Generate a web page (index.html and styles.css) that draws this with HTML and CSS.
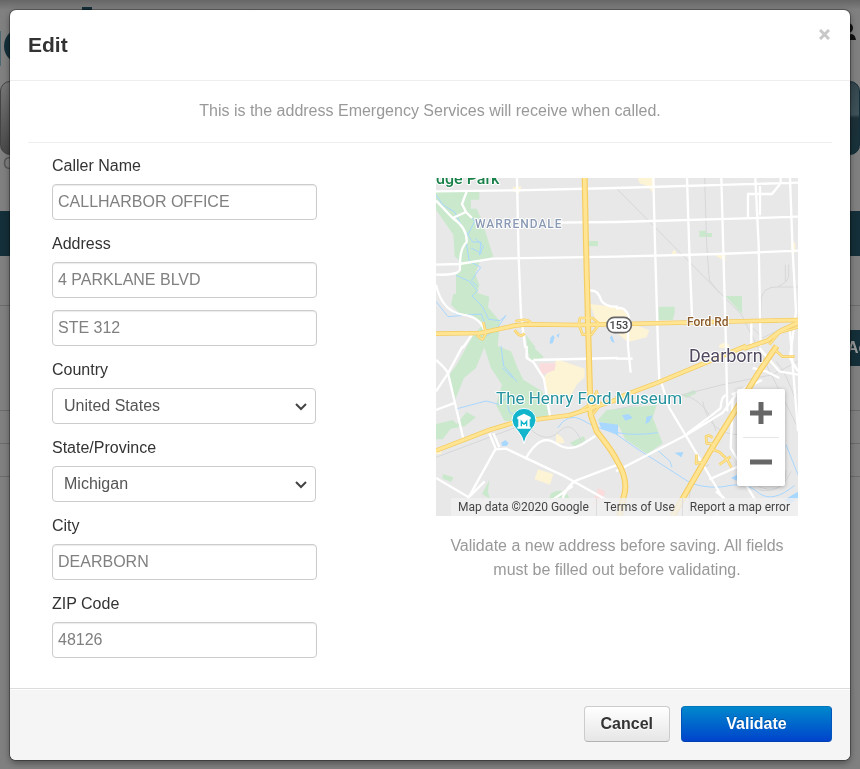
FILE: index.html
```html
<!DOCTYPE html>
<html lang="en">
<head>
<meta charset="utf-8">
<title>Edit</title>
<link rel="stylesheet" href="styles.css">
</head>
<body>
<div class="page" aria-hidden="true">
  <div class="page-top">
    <svg class="page-logo" width="100" height="81" viewBox="0 0 100 81"><path d="M0 31h1v35H0z" fill="#4d6870"/><circle cx="22" cy="46" r="18" fill="#142f39"/><path d="M82 7h10v30H82z" fill="#142f39"/></svg>
    <svg class="page-user" width="20" height="20" viewBox="0 0 20 20"><circle cx="10" cy="6" r="5"/><path d="M1 18q0-5 6-6l3 2 3-2q4 0 5 6z"/></svg>
  </div>
  <div class="page-tiles"><div class="tile tile-grey"></div><div class="tile tile-teal"></div></div>
  <div class="page-caption">C</div>
  <div class="page-band"></div>
  <div class="page-row row-tall"></div>
  <div class="page-action"><span>Ac</span></div>
  <div class="page-row row-mid"></div>
  <div class="page-row"></div>
  <div class="page-row"></div>
</div>

<div class="modal" role="dialog" aria-labelledby="dialog-title">
  <header class="modal-header">
    <h1 id="dialog-title">Edit</h1>
    <button class="close" type="button" aria-label="Close"><svg width="11" height="11" viewBox="0 0 11 11"><path d="M1 1l9 9M10 1l-9 9"/></svg></button>
  </header>
  <main class="modal-body">
    <p class="intro">This is the address Emergency Services will receive when called.</p>
    <div class="columns">
      <form class="fields" id="address-form">
        <label for="caller">Caller Name</label>
        <input id="caller" type="text" value="CALLHARBOR OFFICE">
        <label for="address">Address</label>
        <input id="address" type="text" value="4 PARKLANE BLVD">
        <input id="address2" type="text" value="STE 312" aria-label="Address line 2">
        <label for="country">Country</label>
        <div class="select"><select id="country"><option>United States</option></select><svg width="14" height="8" viewBox="0 0 14 8"><path d="M2 1l5 5 5-5"/></svg></div>
        <label for="state">State/Province</label>
        <div class="select"><select id="state"><option>Michigan</option></select><svg width="14" height="8" viewBox="0 0 14 8"><path d="M2 1l5 5 5-5"/></svg></div>
        <label for="city">City</label>
        <input id="city" type="text" value="DEARBORN">
        <label for="zip">ZIP Code</label>
        <input id="zip" type="text" value="48126">
      </form>
      <section class="location">
        <div class="map">
          <svg class="map-canvas" viewBox="0 0 362 338" role="img" aria-label="Map of Dearborn">
            <rect width="362" height="338" fill="#e8e8e8"/>
            <g transform="scale(.33333)">
              <g class="park">
                <path d="M0 38H130V65H105V92H122L135 120 172 236 132 248 118 288 130 320 124 345 160 356 156 388 192 430 188 472 185 504 225 520 245 570 262 605 318 640 340 714 270 732 205 728 180 680 198 620 165 570 145 508 120 570 84 600 58 664 40 590 62 560 110 475 145 435 70 405 45 380 52 348H60V290L78 255 56 235 52 170 0 95Z"/>
                <path d="M0 738L50 726 62 738 92 702 120 718 86 745 44 752 20 784H0Z"/>
                <path d="M458 189h28v16h-28zM790 158h20v7h18v12h-38zM868 354h50v53zM668 388l6-2h42v20l-6 20h-42z"/>
                <path d="M270 504h18l35 32-12 14h-26zM484 728l28-32 70-8 80-6-12 36 30 78-46 32-66-44-18-38-36-8zM736 652l38-16 8 10-30 14zM20 888l32 10-6 14-26-10zM138 948l22-42-4 36 6 20zM402 794l42-20 4 14-32 18zM345 946q40-20 55 14h-60z"/>
                <path d="M270 470l30 40h-26z"/>
              </g>
              <g class="commercial">
                <path d="M605 0h50v48l-22-24-22-8zM230 28l26-4-6 22-18-6zM462 378l84 10v50h-62zM540 394q40-10 42 42l58 20-8 22-56 14-36-30V430M708 226l6-12 6 10 10 10h-24zM838 226h30v24l-28-16zM1066 194h12v30h-12zM850 500l20-8 10 10v8h-30z"/>
                <path d="M320 604l44-60 82 28v26l-22 20-26 44-62-14zM306 874l46 14-10 32-46-16zM360 766l18 12 8 16-26 4zM0 820l16-8v16H0z"/>
              </g>
              <path d="M310 556h50l-4 20-44 18zM486 930l22 10-10 30-32 16z" fill="#fbdcdc"/>
              <g class="rail">
                <path d="M540 30L915 408M806 0L812 200 820 306 850 345M975 504V365q5-40 50-38h60M1025 326q30-12 33-32V260M1048 260v50M915 408L1086 750M950 450l30 30 70-36"/>
                <path d="M0 838L245 746M540 694L660 670 860 620 1010 590 1086 550M740 650q75 20 100 110M1020 550q30 30 60 120M280 750q50 50 90 10t70 40M800 670q20 100 110 100M820 860q-70 30-60 150M970 936q80 12 80-60M925 850l20 60q80 60 120-30"/>
              </g>
              <g class="water">
                <path d="M0 50l20 30 36 22 20 40 34 50 25 0-4 40M90 190l10 60 34 18-28 40 18 18M96 170l20-40-26-30M105 210l32 16M60 292l40 18 24 28-16 16 30 30 20 40 34 4 18-16-22 32-36 30M0 370l36 46 100-8 14 40M20 372l34 34 50 8M118 180l24 26-12 24"/>
                <path d="M60 693l90-24 40 10 20-20 10 44 24 12M195 504l8 60 16 18 24 30M200 570l30 30M365 750q30-46 70-26 100 60 230 40M540 768l60 42 165 106q62 20 120 6 46-10 85 24 40 30 106-24M664 816l38 34 6 18M1050 800l36 90"/>
              </g>
              <path d="M343 480l8-9 5 7-6 18-9 1zM361 472l10-6-4 14zM522 478l6-6 8 24-10-6zM488 732l58 8v32l-50-20zM558 712l20-4 12 12-22 8zM650 712l-10 20-12 6 4-22zM716 824l26-2-6 16zM196 794l12-8 10 10-6 8h-14zM885 900l22-12-6 20zM1045 965l41-24v20l-24 16z" fill="#a8d7ff"/>
              <g class="street">
                <path d="M0 40L240 37 540 30 1086 14M360 134L540 132 900 122 1086 116M0 260L70 258 170 242 540 236 850 228 1086 218M243 0L248 240 255 410 268 510M652 0L657 200 666 510 670 610M753 0L760 220 768 416M856 0L862 220 870 504 874 700M958 0L968 200 974 504M1062 0L1070 220 1080 400 1062 540 1086 580M1034 0L1034 16 1008 48H936V118M972 24V112"/>
                <path d="M93 38L78 78 90 102 50 120 0 68M50 120q44 30 42 72-22 20-20 80 0 20-72 18M90 102l18 18M0 320Q18 400 80 410q60 8 68 60M80 510l28-40M462 338q24-4 34 30 12 20 50 18M540 392q30-10 40 30"/>
                <path d="M0 546q30 26 36 40l46 196M0 640l36-54 44-82M0 696l58-22M272 504v36l20 12 32 50 18 114M292 546L546 540M160 766l20 48 30-2 170 80 168 94M172 766l18 42M0 900l98 58 48-48M98 958l80-144M268 844q44-82 92-48 40 28 86-2l32-20M380 960q18-48 55-58L546 860M280 1014l130-90"/>
                <path d="M540 880L752 770 860 704 900 650M674 608L700 690 760 790 860 960M576 430v74l8 80M540 542h50M946 434v70M1062 460L1086 760M970 510l60 70 56 10M950 570l40 10 40 20M888 650l90-44M876 650q-20 0-22 40-10 10-100 76M890 660l-6 150 44 74M820 904l90-40M840 940l24 20-24 54M930 920l30 50"/>
              </g>
              <path class="ramp-edge" d="M142 432l8 34-10 18-14-8 6-16M238 430q36-12 48 6M266 466q-14 16-30-10M432 420h38l20 18-24 32h-26l-12-32zM436 696l30-20 16-36 10 42-22 28M1000 500l30-36 56-16M1020 518l20 18 36 0M830 780q-10-12-20-4l2 20 22 2M824 812l26 10 22 20 14 26M850 860l34-24M782 830l-2 26 24-4"/>
              <path class="highway-edge thin" d="M0 467L135 465 235 443 270 439 430 441 1086 426M0 818L160 756 240 732 400 712 540 666M540 662Q605 636 665 614L930 504M924 512l70-24 40-30 52-24"/>
              <path class="highway-edge" d="M446 0L450 200 456 440 458 504 464 710 482 760Q530 820 544 850 580 910 562 960L550 1014M1022 504L970 580 900 694 822 820 710 1014"/>
              <path class="ramp" d="M142 432l8 34-10 18-14-8 6-16M238 430q36-12 48 6M266 466q-14 16-30-10M432 420h38l20 18-24 32h-26l-12-32zM436 696l30-20 16-36 10 42-22 28M1000 500l30-36 56-16M1020 518l20 18 36 0M830 780q-10-12-20-4l2 20 22 2M824 812l26 10 22 20 14 26M850 860l34-24M782 830l-2 26 24-4"/>
              <path class="highway thin" d="M0 467L135 465 235 443 270 439 430 441 1086 426M0 818L160 756 240 732 400 712 540 666M540 662Q605 636 665 614L930 504M924 512l70-24 40-30 52-24"/>
              <path class="highway" d="M446 0L450 200 456 440 458 504 464 710 482 760Q530 820 544 850 580 910 562 960L550 1014M1022 504L970 580 900 694 822 820 710 1014"/>
              <path d="M264 797q-4-22-20-40-16-16-16-30a36 36 0 1172 0q0 14-16 30-16 18-20 40z" fill="#12b5cb" stroke="#fff" stroke-width="3"/>
              <path d="M244 724v-7l20-10 20 10v7zM247 724h34v22h-34zM244 746h40v6h-40z" fill="#fff"/>
              <path d="M256 745v-15l8 9 8-9v15" fill="none" stroke="#12b5cb" stroke-width="4"/>
              <rect x="513" y="418" width="73" height="46" rx="22" fill="#fff" stroke="#666" stroke-width="5"/>
            </g>
            <text class="map-label green" x="0" y="6">dge Park</text>
            <text class="map-label district" x="39" y="50">WARRENDALE</text>
            <text class="map-label route" x="183" y="151">153</text>
            <text class="map-label road" x="251" y="148">Ford Rd</text>
            <text class="map-label city" x="253" y="184">Dearborn</text>
            <text class="map-label museum" x="60" y="226">The Henry Ford Museum</text>
          </svg>
          <div class="zoom">
            <button type="button" aria-label="Zoom in"><svg width="22" height="22" viewBox="0 0 22 22"><path d="M11 0v22M0 11h22"/></svg></button>
            <button type="button" aria-label="Zoom out"><svg width="22" height="22" viewBox="0 0 22 22"><path d="M0 11h22"/></svg></button>
          </div>
          <div class="attribution"><span>Map data ©2020 Google</span><a href="#terms">Terms of Use</a><a href="#report">Report a map error</a></div>
        </div>
        <p class="hint">Validate a new address before saving. All fields must be filled out before validating.</p>
      </section>
    </div>
  </main>
  <footer class="modal-footer">
    <button class="btn" type="button">Cancel</button>
    <button class="btn primary" type="submit" form="address-form">Validate</button>
  </footer>
</div>
</body>
</html>
```
FILE: styles.css
```css
* { box-sizing: border-box; }
html, body { height: 100%; }
body {
  margin: 0;
  padding: 10px;
  overflow: hidden;
  background: #808080;
  color: #333;
  font: 16px/24px "Liberation Sans", Arial, sans-serif;
}
button, input, select { font: inherit; }
h1, p { margin: 0; }

/* Dimmed page behind the dialog */
.page { position: fixed; inset: 0; overflow: hidden; }
.page-top {
  display: flex;
  justify-content: space-between;
  height: 81px;
  background: linear-gradient(#666, #808080 10px);
}
.page-user { margin-top: 22px; margin-right: 2px; fill: #111; }
.page-tiles { display: flex; justify-content: space-between; height: 74px; }
.tile { width: 110px; border: 1px solid #444; border-radius: 10px; }
.tile-grey { background: linear-gradient(#777, #484848); }
.tile-teal { background: linear-gradient(#34454d, #3f525a 45%, #1d3038 50%, #18323b); border-color: #142f39; }
.page-caption { height: 56px; padding-left: 3px; line-height: 18px; color: #555; }
.page-band { height: 45px; background: #142f39; }
.page-row { height: 33px; border-bottom: 1px solid #6b6b6b; }
.row-tall { height: 50px; }
.row-mid { height: 45px; }
.page-action { display: flex; justify-content: flex-end; height: 36px; margin-top: 24px; background: linear-gradient(90deg, transparent 50%, #142f39 50%); }
.page-action span { width: 13px; line-height: 36px; font-weight: bold; color: #999; }

.modal {
  position: relative;
  border-radius: 6px;
  background: #fff;
  box-shadow: 0 0 0 1px rgba(0, 0, 0, .3), 0 3px 7px rgba(0, 0, 0, .4);
}
.modal-header {
  display: flex;
  justify-content: space-between;
  align-items: flex-start;
  padding: 18px;
  border-bottom: 1px solid #eee;
}
.modal-header h1 { font-size: 21px; line-height: 34px; }
.close { display: flex; padding: 0; margin: 1px 2px; border: 0; background: none; }
.close path { stroke: #c8c8c8; stroke-width: 3; fill: none; }

.modal-body { padding: 18px 18px 30px; }
.intro { padding-bottom: 19px; border-bottom: 1px solid #eee; text-align: center; color: #999; }
.columns { display: flex; justify-content: space-between; padding: 11px 34px 0 24px; }
.fields { display: flex; flex-direction: column; width: 265px; }
.fields label { margin-bottom: 6px; }
.fields input, .select { height: 36px; margin-bottom: 12px; }
.fields input {
  padding: 4px 5px;
  border: 1px solid #ccc;
  border-radius: 4px;
  box-shadow: inset 0 1px 1px rgba(0, 0, 0, .08);
  color: #808080;
}
.fields input:last-child { margin-bottom: 0; }
.select { position: relative; width: 264px; }
.select select {
  appearance: none;
  width: 100%;
  height: 100%;
  padding: 4px 11px;
  border: 1px solid #ccc;
  border-radius: 4px;
  background: #fff;
  color: #555;
}
.select svg { position: absolute; right: 8px; top: 15px; pointer-events: none; }
.select path { fill: none; stroke: #444; stroke-width: 2; }

.location { width: 362px; padding-top: 24px; }
.map { position: relative; border-radius: 1px; }
.map-canvas { display: block; width: 100%; }
.hint { margin-top: 18px; text-align: center; color: #999; }
.park { fill: #cae8cc; }
.commercial { fill: #fdf3d5; }
.rail { fill: none; stroke: #d6d7d9; stroke-width: 3; }
.water { fill: none; stroke: #a8d7ff; stroke-width: 3; }
.street { fill: none; stroke: #fff; stroke-width: 7; stroke-linejoin: round; }
.highway-edge { fill: none; stroke: #f5cd62; stroke-width: 18; }
.highway { fill: none; stroke: #ffe593; stroke-width: 11; }
.highway-edge.thin { stroke-width: 14; }
.highway.thin { stroke-width: 9; }
.ramp-edge { fill: none; stroke: #f5cd62; stroke-width: 8; stroke-linejoin: round; }
.ramp { fill: none; stroke: #ffe593; stroke-width: 4; stroke-linejoin: round; }
.map-label {
  font-family: Roboto, sans-serif;
  font-weight: 500;
  paint-order: stroke;
  stroke: #fff;
  stroke-width: 2px;
  stroke-linejoin: round;
}
.green { font-size: 16px; fill: #188048; }
.district { font-size: 12px; letter-spacing: 1px; fill: #8a9ab4; }
.route { font-size: 11px; text-anchor: middle; fill: #444; }
.road { font-size: 12px; fill: #8b5a2b; }
.city { font-size: 18px; font-weight: 400; fill: #51495f; }
.museum { font-size: 17px; font-weight: 400; fill: #23929d; }

.zoom {
  position: absolute;
  right: 13px;
  bottom: 30px;
  width: 48px;
  border-radius: 2px;
  background: #fff;
  box-shadow: 0 1px 4px rgba(0, 0, 0, .3);
}
.zoom button { display: grid; place-items: center; width: 48px; height: 48px; padding: 0; border: 0; background: none; }
.zoom button + button::before { content: ""; position: absolute; top: 48px; width: 36px; height: 1px; background: #e6e6e6; }
.zoom button + button { height: 49px; padding-top: 1px; }
.zoom path { fill: none; stroke: #666; stroke-width: 5; }
.attribution {
  position: absolute;
  right: 0;
  bottom: 0;
  display: flex;
  padding-right: 1px;
  background: rgba(240, 240, 240, .8);
  font: 12px/18px Roboto, sans-serif;
  color: #444;
}
.attribution span, .attribution a { padding: 0 7px; white-space: nowrap; }
.attribution a { border-left: 1px solid #ddd; color: inherit; text-decoration: none; }

.modal-footer {
  display: flex;
  justify-content: flex-end;
  gap: 11px;
  padding: 17px 18px 18px;
  border-top: 1px solid #ddd;
  border-radius: 0 0 6px 6px;
  background: #f5f5f5;
  box-shadow: inset 0 1px 0 #fff;
}
.btn {
  height: 36px;
  padding: 0 16px;
  border: 1px solid #ccc;
  border-bottom-color: #b3b3b3;
  border-radius: 4px;
  background: linear-gradient(#fff, #e6e6e6);
  color: #333;
  font-weight: bold;
  text-shadow: 0 1px 1px rgba(255, 255, 255, .75);
}
.primary {
  min-width: 151px;
  border-color: #0077bb #0055bb #003fb3;
  background: linear-gradient(#08c, #04c);
  color: #fff;
  text-shadow: 0 -1px 0 rgba(0, 0, 0, .25);
}
```
